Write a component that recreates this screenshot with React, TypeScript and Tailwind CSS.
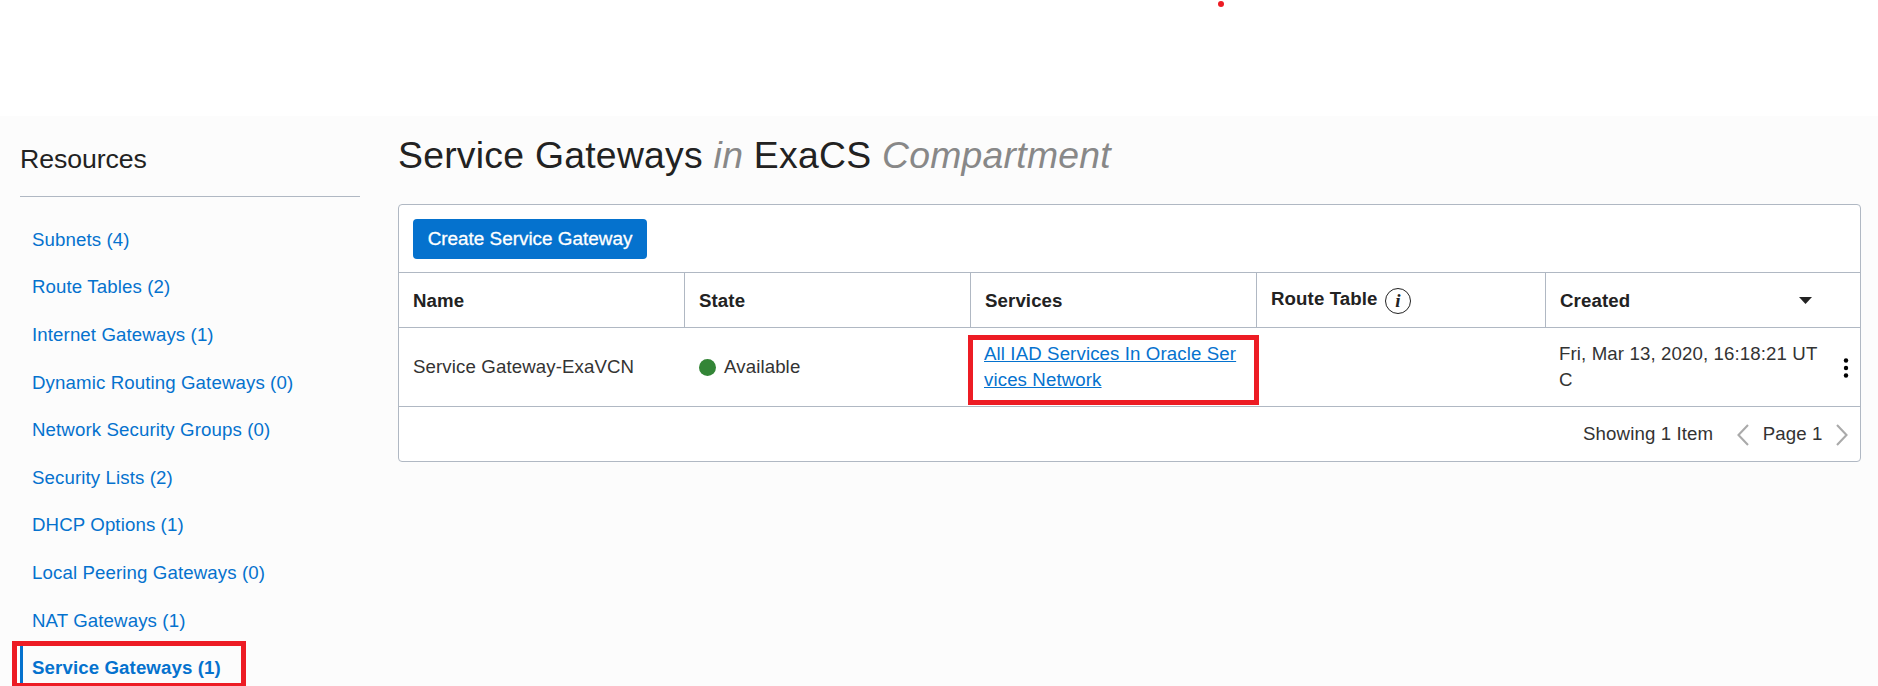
import React from "react";

const resources = [
  "Subnets (4)",
  "Route Tables (2)",
  "Internet Gateways (1)",
  "Dynamic Routing Gateways (0)",
  "Network Security Groups (0)",
  "Security Lists (2)",
  "DHCP Options (1)",
  "Local Peering Gateways (0)",
  "NAT Gateways (1)",
  "Service Gateways (1)",
];

function InfoIcon() {
  return (
    <span className="flex h-[26px] w-[26px] shrink-0 items-center justify-center rounded-full border-[1.5px] border-[#222] pb-px font-['Liberation_Serif',serif] text-[19px] font-bold italic leading-none tracking-normal">
      i
    </span>
  );
}

function Chevron({ d }: { d: string }) {
  return (
    <svg className="mt-0.5 h-[22px] w-3 shrink-0" viewBox="0 0 12 22" fill="none">
      <path d={d} stroke="#aaaaaa" strokeWidth="2.1" />
    </svg>
  );
}

function Sidebar() {
  return (
    <aside className="ml-5 w-[340px] shrink-0">
      <h2 className="h-[81px] border-b border-[#b0b8c3] pt-[23px] text-[26.67px] leading-10 tracking-[-0.08px] text-[#222]">
        Resources
      </h2>
      <ul className="pt-[19px]">
        {resources.map((label, i) => (
          <li
            key={label}
            className={
              i === resources.length - 1
                ? "flex h-[47.6px] items-center border-l-[3px] border-[#0572ce] pl-[9px] font-bold text-[#0572ce]"
                : "flex h-[47.6px] items-center pl-3 text-[#0572ce]"
            }
          >
            {label}
          </li>
        ))}
      </ul>
    </aside>
  );
}

function GatewayTable() {
  return (
    <section className="h-[258px] w-[1463px] rounded-[4px] border border-[#b0b8c3] bg-white">
      <div className="flex h-[67px] px-[14px] pt-[14px]">
        <button className="h-10 w-[234px] rounded-[4px] bg-[#0572ce] text-[18.9px] tracking-normal text-white [-webkit-text-stroke:0.3px_white]">
          Create Service Gateway
        </button>
      </div>
      <div className="flex h-[56px] border-y border-[#b0b8c3] font-bold tracking-[0.1px] text-[#222]">
        <div className="flex w-[286px] items-center border-r border-[#b0b8c3] pl-[14px] pt-px">Name</div>
        <div className="flex w-[286px] items-center border-r border-[#b0b8c3] pl-[14px] pt-px">State</div>
        <div className="flex w-[286px] items-center border-r border-[#b0b8c3] pl-[14px] pt-px">Services</div>
        <div className="flex w-[289px] items-center border-r border-[#b0b8c3] pl-[14px] pt-px">
          <span className="mr-[7.5px] pb-[3px]">Route Table</span>
          <InfoIcon />
        </div>
        <div className="flex flex-1 items-center justify-between pl-[14px] pr-12 pt-px">
          Created
          <svg className="h-[7px] w-[13px]" viewBox="0 0 13 7">
            <path d="M0 0h13L6.5 7z" fill="#222" />
          </svg>
        </div>
      </div>
      <div className="flex h-[79px] border-b border-[#b0b8c3] text-[#333]">
        <div className="flex w-[286px] items-center pl-[14px]">Service Gateway-ExaVCN</div>
        <div className="flex w-[286px] items-center pl-[14px]">
          <span className="mr-[8px] h-[17px] w-[17px] rounded-full bg-[#338536]" />
          Available
        </div>
        <a className="w-[286px] pl-[13px] pt-[12.5px] leading-[26px] text-[#0572ce] underline">
          All IAD Services In Oracle Ser
          <br />
          vices Network
        </a>
        <div className="w-[289px]" />
        <div className="w-[297px] pl-[13px] pt-[12.5px] leading-[26px]">
          Fri, Mar 13, 2020, 16:18:21 UT
          <br />C
        </div>
        <svg className="mt-[29.7px] h-5 w-[6px] shrink-0" viewBox="0 0 6 20">
          <circle cx="3" cy="2.5" r="2.2" />
          <circle cx="3" cy="10" r="2.2" />
          <circle cx="3" cy="17.5" r="2.2" />
        </svg>
      </div>
      <div className="flex h-[54px] items-center justify-end pr-[12px] text-[#333]">
        <span className="mr-6">Showing 1 Item</span>
        <Chevron d="M11 1 L1.5 11 L11 21" />
        <span className="mx-[13.5px]">Page 1</span>
        <Chevron d="M1 1 L10.5 11 L1 21" />
      </div>
    </section>
  );
}

export default function App() {
  return (
    <div className="relative h-[686px] w-[1878px] overflow-hidden bg-white pt-[116px] font-['Liberation_Sans',Arial,sans-serif] text-[18.67px] tracking-[0.11px]">
      <div className="flex h-[600px] bg-[#fcfcfc]">
        <Sidebar />
        <main className="ml-[38px]">
          <h1 className="h-[88px] pt-[17px] text-[37.33px] leading-[44px] tracking-[0.26px] text-[#222]">
            Service Gateways <em className="text-[#888]">in</em> ExaCS <em className="text-[#888]">Compartment</em>
          </h1>
          <GatewayTable />
        </main>
      </div>
      <div className="absolute left-[12px] top-[641px] h-[47px] w-[234px] border-[5px] border-[#ed1c24]">
        <div className="h-full w-[3px] bg-white" />
      </div>
      <div className="absolute left-[968px] top-[335px] h-[70px] w-[291px] border-[5px] border-[#ed1c24]" />
      <div className="absolute left-[1218px] top-px h-[6px] w-[6px] rounded-full bg-[#ed1c24]" />
    </div>
  );
}
